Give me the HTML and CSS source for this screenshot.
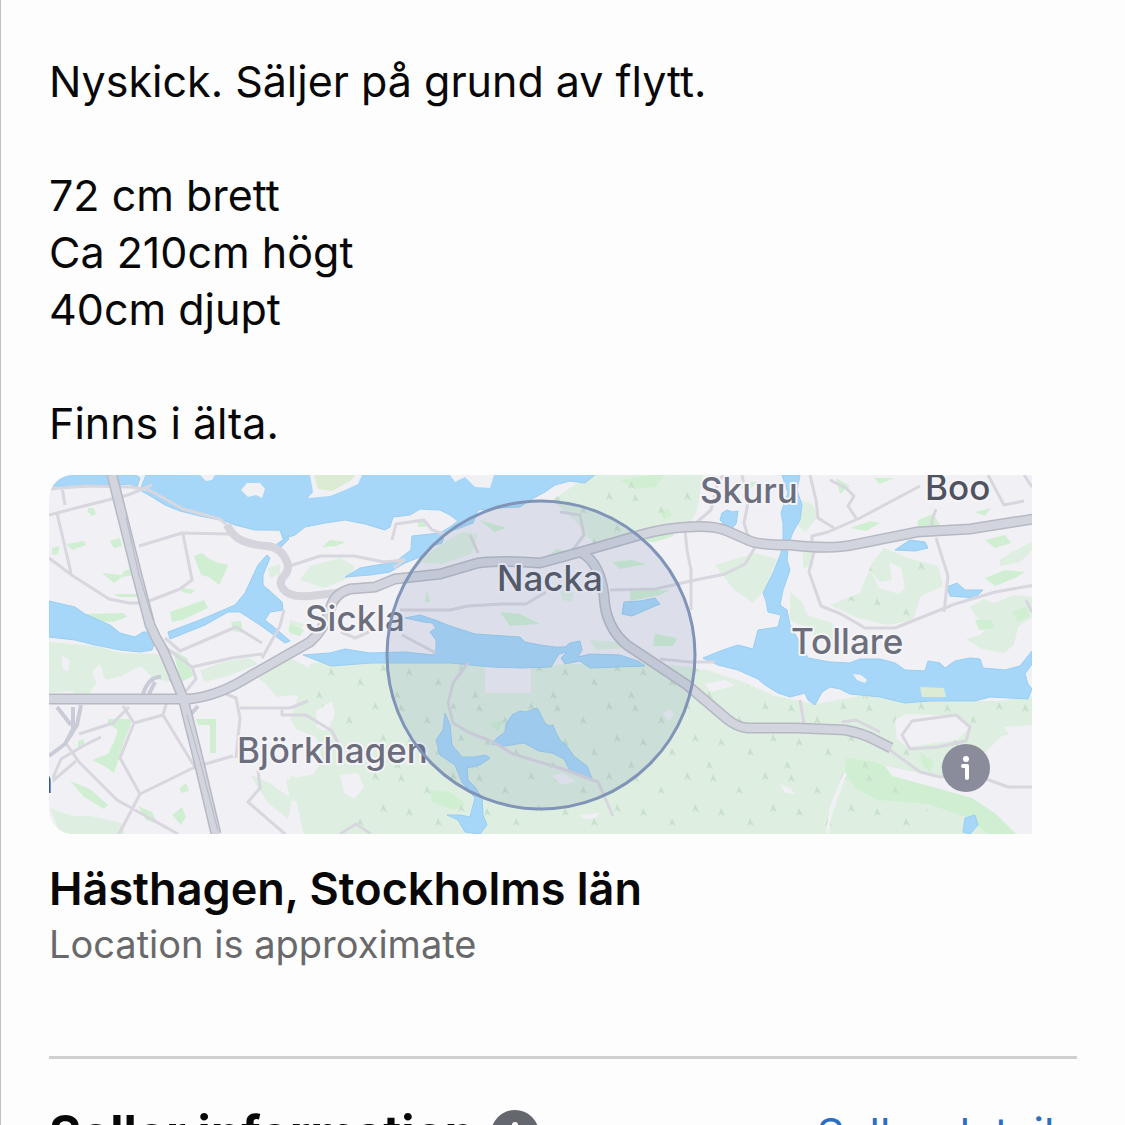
FILE: index.html
```html
<!DOCTYPE html>
<html lang="sv">
<head>
  <meta charset="utf-8">
  <title>Hästhagen, Stockholms län</title>
  <link rel="stylesheet" href="styles.css">
</head>
<body>
  <main class="listing">
    <p class="description">Nyskick. Säljer på grund av flytt.

72 cm brett
Ca 210cm högt
40cm djupt

Finns i älta.</p>

    <div class="map">
      <svg class="map-image" viewBox="49 475 983 359" role="img" aria-label="Nacka">
        <defs>
          <pattern id="trees" width="78" height="70" patternUnits="userSpaceOnUse">
            <path class="tree" d="M8 12l3-8 4 8-4-2zM34 24l3-8 4 8-4-2zM60 10l3-8 4 8-4-2zM16 46l3-8 4 8-4-2zM45 56l3-8 4 8-4-2zM68 42l3-8 4 8-4-2zM4 69l3-8 4 8-4-2z"/>
          </pattern>
        </defs>
        <rect class="land" x="49" y="475" width="983" height="359"/>

        <!-- forest and parks -->
        <g class="forest">
          <path d="M310 664l30-6h80l50 4 75 3 95-3 50 5 20 4 30 10 35 15 40 8 45-8 60 5h80l32-5v34l-30 6-25 25-8 28 20 15 12 30v24H346l-6-20-12-30-38-8-4-20 28-6 8-15-6-22-20-8-6-10z"/>
          <path d="M590 475h113l-6 35-8 17-40 6-50 17-25-30-22-20zM310 566l30-8 15 8-6 12-25 10-24-8zM448 540l14-8 16 2-6 20-30 10-26-2zM49 642l45 4 28 7 35 1 14 12-3 16-15-4-12-12-20 10-24 6-12 18-14-9-22 2zM830 605l30-12 12-30 12-15 24 10 30 8 5 20-22 10-8 24-25 5-30-7zM715 565l40-12 22 6-12 30-12 14-20-14z"/>
          <path d="M970 607l14-8 10 4 20-8 18 2v20l-14 10-4 18-10 8-22-4-16-10 14-4 8-8-10-8zM1000 560l12-8 20-10v8l-12 12-20 4z"/>
          <path d="M250 672l40-14 20 10 15 30-15 5-15-8-18 2-12-14zM50 808l22 8 18 0 32 7 3 11H60zM250 775l20 8 22 16-4 20-20-16zM290 775l25 10 18 20 15 29h-44zM860 715l40 5 30-5 26-8 60 4-10 22-30-8-30 4-45-4z"/>
          <path d="M790 592l12 10 6 14 22 6 14 12-4 6-24-4-14-10-12-6zM803 550l12 2-2 14-10 2zM800 500l12 4 6 12-12 16-8-6zM805 668l20 2 6 8-14-4zM800 662l20 0-4 3zM268 568l12-4 0 10-10 4zM290 620l14 4-6 12-8-2zM240 522l28 4 16-1-4 7-20-2zM200 670l24-8 26-4 8 6-30 12-24 6zM560 590l14 2-2 10-10-2zM590 640l30 2 4 6-28 2z"/>
        </g>
        <g class="park">
          <path d="M194 556l8-3 6 5 8 4 12 3-4 10-5 10-10-8-8-2-3-8zM170 612l34-12 4 8-26 12-10 2zM84 614l40-1 3 4-14 5-26-2zM173 650l14 8 6 18-12 6zM196 719h20v34h-6v-28h-12zM108 719l24 0-2 8-6 14-4 14-6 18-10-7-12-6 16-6 6-12 4-12-10-6zM78 741l6-2v8l-6 0z"/>
          <path d="M70 781l20 8 18 16-4 4-20-12zM102 573l20 2 2-4 12-4-2 8-12 2-8 6zM110 541l10-3 2 8-8 2zM66 544l18-3 2 4-14 5zM88 508h6l2 6-4 2-4-4zM116 594h30v3h-26l-6-2zM172 815l10-8 4 10-5 8zM138 806l14 6 6 12-12-4zM180 788l6-5 3 8-8 2zM52 548l8-2-2 8-6 1zM183 588l12 2-4 4-10-2zM231 622l10-1 2 12-10-2zM290 624l14 6-4 6-12-5z"/>
          <path d="M846 758l30 4 30 16 50 10 30 16 30 30h-28l-20-16-40-14-50-4-20-10-14-16zM920 752l14 10-4 10-8-8zM418 520l10 2-2 5-8 0zM330 540l16 2-10 4-14 1zM918 520l15-6 9 14-6 4-18-4zM620 480l30-5h14l-8 12-20 2zM985 540l20-5 6 8-16 5zM836 478l14 8-10 8zM985 578l20-8 20 2-10 6-20 8zM850 528l20-7 10 2-14 8zM874 478h20l-14 6zM936 485l10 4-6 4zM975 512l16-4-6 8zM1012 612l14-6 4 10-12 6zM975 620l16 0 4 8-16 2zM430 790l20 2 16 12-12 6-22-8z"/>
          <path d="M630 590h40l-10 5-30 6zM612 562l20-2 14 4-26 5zM500 612l20 2 20 10-30 2zM550 555l6-6 12 2-4 6zM480 520l26 8-12 4zM630 540l40-12 4 8-20 6zM425 602l2-12 3 12zM735 485l22-4-8 10zM655 634l22 4-4 8-20 0zM490 724l14-4-6 12zM660 512l8-4 4 8-8 4z"/>
        </g>
        <path class="tree-fill" d="M310 664l30-6h80l50 4 75 3 95-3 50 5 50 14 35 15 40 8 45-8 60 5h80l32-5v34l-30 6-45 20-10 22-40-10 10 30 30 33H346l-6-20-12-30-6-30 8-15-6-22-20-8zM590 475h113l-6 35-8 17-40 6-50 17-25-30-22-20zM830 605l30-12 12-30 12-15 24 10 30 8 5 20-22 10-8 24-25 5-30-7z"/>

        <!-- clearings -->
        <path class="land" d="M485 665h46v28h-46zM705 684l20-4 10 5-12 4-12 3zM663 714l7-5 4 6-5 6zM580 815l20-2-4 5-12 1zM552 776l10-3 14 8-14 4zM780 784l10 4 5 6-10-1zM895 720l10-6 54 2 10 12-12 12-50 7-10-8zM830 806l14-34 3 2-15 40-4 20-2-1zM885 766l40 8 20 4 34 8 16 14 17 14-10 4-30-20-50-14-30-8zM1004 727l28-2v46l-12-8-5-18zM316 711l16-10 3 14-8 16-10-3zM340 775l18-2 6 14-10 12-10-6zM870 570l10 12 12-2-3-18 12 6 4 20-6 6-20-6zM92 672l8-8 4 14 8 4-14 4zM62 656l8 4-2 12-6-4z"/>

        <!-- water -->
        <g class="water">
          <path d="M58 475l-8 11 30 1 50-3 7 3 3-9-4-3z"/>
          <path d="M146 475l-6 15 12 7 13 8 15 6 20 5 25 5 10 4 20 5h25l3 9 12-4 10-8 20-4 20-3 20 4 20 6 5-3 3-10 17-2 10-6 20 1 10 5 8 6-8 6-10 6-28 3-1 14-16 12-35 6-15 9 25-2 20-3 15-9 15-6 15-12 7-2 3-10 15-5 13-5 5-13 22-2 20-1 10-7 15-8 10-7 15-4 15 2 10-8 7-5z"/>
          <path d="M49 601l26 6 10 7 25 11 10 8 15 4 8-5 7 0 5 9-3 9-12 2-20-2-25-5-20-5-26-3z"/>
          <path d="M168 632l32-12 35-15 10-12 13-28 9-10 3 3-7 17v10l8 7 11 10 1 8-13 2-5 8 10 8 15 13-5 2-25-18-20-13h-12l-23 13-35 14zM277 544l10-7 2 2-8 8z"/>
          <path d="M303 655l27-2 15-4 25 4 35-1 28 3 3-6 0-9-6-8 6-4-4-5-8-1-19-4 15-3 15 5 15 6 25 8 45 3 5 5 15 3 15 2 10 0 5-4 10-2 2 9-4 7 12-3 30 1 18 6 7 5-55 2-10-7-15 3-4-6 6-6-8 2-8 13-30 1-30-1-40-4h-80l-40 3z"/>
          <path d="M492 744l5-6 8-6 1-8 6-9 8-4 6 1 11-4 3 5 5 10 4 3 4-1 3 8 4 7 6 5 8 11 10 8 3 2 5 12-6 0-7-4-10-5-5-10-12-6-13-2-15-8-20 3z"/>
          <path d="M445 713l5 12 2 20 10 12 13 0 10-2 5 3-10 7-13 3 1 12 7 7 7 11 1 17 4 10-7 9-15-2-7-12-11-5 13 0 10 2 5-19-13-16-7-17-15-10-4-15 7-10z"/>
          <path d="M624 602l16-1 15-3 5 6-12 5-16 7-10-2zM722 513l5-3 6 2 5-1-2 13-6 6-10-10zM895 550l15-10 15 2 3 6-13 3zM947 587l10-4 8 7 18 0-8 8-25-2zM965 818l10-3 3 10-8 9-7-2z"/>
          <path d="M782 475h18l-3 15 5 15-2 15-7 12-5 13-1 15 3 10-7 20-3 15 7 5 3 15 10 18 8 15 22 4 20 1 10-4 20 0 15 4 10 7 20 1 3-10 12 2 5 5 10-7 15-3 10 1 3 9 22 2 15-4 12-15v13l-7 10 3 10 4 5-4 10-38-2-15 4h-45l-25 2-25-6-30-3-10-5-10-2-8 5-7 13-7-5-3-7-15 4-12-4-13-8-7-6-20-9-20-5-15-7 20-8 15-5 15 4 5-19 20-3 3-12-13-3-2-11-3-8 10-20 8-20 2-15v-15l-2-10 7-20z"/>
        </g>
        <path class="land" d="M310 475l3 17-5 6 22-2 15-6 13-6 4-9zM450 475l5 7 10-5 10 10 15 1 4-13zM241 490l6-7 13 0 5 6-3 9-6-3-8 2zM200 475l6 6 6-1 3-5zM853 674l8 1 6 5-2 3-8-3z"/>
        <path class="meadow" d="M314 475l4 14 14 2 18-10 6-6zM920 687l24 1 2 9h-24z"/>

        <!-- small streets -->
        <g class="streets">
          <path d="M49 515l35-9 44-11 24-10M62 487l3 18M57 513l14 60M49 558l24 18 36 23 20 4h16M139 546l43-13 48 1M183 534l9 46-12 9-31 12M49 489l38-3 44 1 18 3 34 19 37 10 10 9M165 638l15 13 28-12 28-12 26 16M262 658l18-32 4-16M165 647l27 20 40-9 30-4M192 667l4 12-10 12M49 787l12-28 22-13 18-9M79 734l34-11 16-16M65 742l14 20 38 38 61 34M123 706l11 17 29-8 33 54M134 723l-14 35 20 36 55-27 38-11M49 784l27-23M140 794l-21 40M163 715l4-14M216 690l20 8 4 20-4 40M240 708l50 0 18-7M282 710v5h24l26 16 8 16M258 770l2 18-12 14 37 32M290 566l30-10 34 0 30 6 20-2-10 8M392 540l4-16 28-4 8 10 12 4M340 834l16-10 15 10"/>
          <path d="M400 610l50 0 18-4 34-2 24 0 20-12M402 635l34 18M341 632l14 6 14-6M468 663l-15 20-5 20 5 20 15 9 25 10 20 12 50 15 35 13 15 34M610 590l45-1 45-10 25-5 20-10 12-20M685 530l2 20 4 20v40M750 543l-6-20 4-20-6-28M697 522l14-12 6-25 6-10M660 659l30 3h25M560 512l20 3 4 20-12 16M470 535l8 18"/>
          <path d="M810 475l6 25 2 18 16 10M830 480l16 8 8 8-6 10 8 12M812 548l0-12 16-4 32-14 60-32M932 535v-14l4-12M814 552l-5 20 12 34 20 8 24 14h30l60-24 40-12 57-10M936 538l12 38-4 36M988 475l16 30 20-4M1024 475l8 12M800 700l4 24M842 722l14-2 24 12M890 750l30 22 20 5 30-4 38 14h24M902 735l10-14 44-6 14 12-4 14-28 6-28 2zM1026 600l6 12"/>
        </g>
        <g class="road">
          <path d="M227 525q6 12 16 16t24 5 20 16q3 8-3 14t-1 13q7 9 27 7l35-4"/>
        </g>
        <g class="ramps">
          <path d="M49 756l16-12 8-15v-22M57 707l14 18M81 705l-4 20-10 16M143 694q6-18 18-17M149 694l6-12M170 678l10 14M198 706l-12 14"/>
        </g>

        <!-- motorways: casing first, then surface -->
        <g class="casing">
          <path d="M582 553q18 10 22 42 1 32 23 50l60 40 40 34q10 8 20 9h50l48 2q20 4 30 10l16 8"/>
          <path d="M112 475l10 40 15 60 13 50q5 12 13 25 8 18 20 48l15 60 18 76M49 699h140q30-3 61-23l60-34q14-12 20-32 3-16 20-21l25-2 20-8 45-5 38-11q24-3 62 0 45-12 100-28 26-7 47-8 24-2 38 3l25 11q10 4 40 4 45 5 67-1l60-12 53-3 95-15"/>
        </g>
        <g class="surface">
          <path d="M582 553q18 10 22 42 1 32 23 50l60 40 40 34q10 8 20 9h50l48 2q20 4 30 10l16 8"/>
          <path d="M112 475l10 40 15 60 13 50q5 12 13 25 8 18 20 48l15 60 18 76M49 699h140q30-3 61-23l60-34q14-12 20-32 3-16 20-21l25-2 20-8 45-5 38-11q24-3 62 0 45-12 100-28 26-7 47-8 24-2 38 3l25 11q10 4 40 4 45 5 67-1l60-12 53-3 95-15"/>
        </g>
        <path class="lane" d="M126 517l13 58 14 45M187 715l14 50 17 66"/>

        <g class="labels">
          <text x="700" y="503">Skuru</text>
          <text x="791" y="654">Tollare</text>
          <text x="305" y="631">Sickla</text>
          <text x="237" y="763">Björkhagen</text>
          <text class="town" x="497" y="591">Nacka</text>
          <text class="town" x="925" y="500">Boo</text>
          <text class="town" x="32" y="793">n</text>
        </g>
        <circle class="area" cx="541" cy="655" r="154"/>
      </svg>
      <button class="map-info" type="button" aria-label="Map information">
        <svg viewBox="0 0 48 48" aria-hidden="true">
          <circle cx="24" cy="15" r="3"/>
          <path d="M21 22h4v12"/>
        </svg>
      </button>
    </div>

    <h2 class="place">Hästhagen, Stockholms län</h2>
    <p class="note">Location is approximate</p>

    <section class="seller">
      <h2 class="seller-title">Seller information</h2>
      <button class="seller-info" type="button" aria-label="About seller information">
        <svg viewBox="0 0 48 48" aria-hidden="true">
          <circle cx="24" cy="15" r="3"/>
          <path d="M21 22h4v12"/>
        </svg>
      </button>
      <a class="seller-link" href="#">Seller details</a>
    </section>
  </main>
</body>
</html>
```

FILE: styles.css
```css
* {
  box-sizing: border-box;
}

body {
  margin: 0;
  height: 100vh;
  overflow: hidden;
  background-color: #fdfdfd;
  color: #080808;
  font-family: Inter, "Liberation Sans", sans-serif;
}

.listing {
  min-height: 100vh;
  padding: 53px 48px 0;
  border-left: 1px solid #c0c0c0;
}

.description {
  margin: 0;
  font-size: 43px;
  line-height: 57px;
  white-space: pre-line;
}

.map {
  position: relative;
  max-width: 983px;
  margin-top: 23px;
  border-radius: 24px 0 0 24px;
  overflow: hidden;
}

.map-image {
  display: block;
  width: 100%;
}

.land {
  fill: #f1f0f5;
}

.forest {
  fill: #deefe1;
}

.park {
  fill: #d0efd2;
}

.tree {
  fill: #c8e0cd;
}

.tree-fill {
  fill: url(#trees);
}

.meadow {
  fill: #dcebd4;
}

.water {
  fill: #a6d7f9;
  stroke: #98cef1;
  stroke-width: 1;
}

.streets {
  fill: none;
  stroke: #d8d6de;
  stroke-width: 3;
  stroke-linejoin: round;
}

.road {
  fill: none;
  stroke: #d5d3db;
  stroke-width: 8;
}

.ramps {
  fill: none;
  stroke: #c9cbd6;
  stroke-width: 4;
}

.casing {
  fill: none;
  stroke: #b6b8c4;
  stroke-width: 11;
}

.surface {
  fill: none;
  stroke: #d2d4de;
  stroke-width: 8;
}

.lane {
  fill: none;
  stroke: #b6b8c4;
  stroke-width: 1;
}

.labels {
  fill: #6c6e7c;
  stroke: #f4f4f8;
  stroke-width: 4;
  stroke-linejoin: round;
  paint-order: stroke;
  font-size: 35px;
  font-weight: 500;
}

.town {
  fill: #50525e;
}

.area {
  fill: #6f86b0;
  fill-opacity: 0.16;
  stroke: #8094b8;
  stroke-width: 3;
}

.map-info,
.seller-info {
  width: 48px;
  height: 48px;
  padding: 0;
  border: none;
  border-radius: 50%;
  background-color: #8b8c9b;
  cursor: pointer;
}

.map-info {
  position: absolute;
  right: 42px;
  bottom: 42px;
}

.map-info svg,
.seller-info svg {
  display: block;
  fill: #fff;
}

.map-info path,
.seller-info path {
  fill: none;
  stroke: #fff;
  stroke-width: 4;
  stroke-linecap: round;
  stroke-linejoin: round;
}

.place {
  margin: 26px 0 0;
  font-size: 45px;
  line-height: 57px;
  font-weight: 600;
}

.note {
  margin: 0;
  color: #69696b;
  font-size: 38px;
  line-height: 54px;
}

.seller {
  display: flex;
  align-items: center;
  margin-top: 85px;
  padding-top: 46px;
  border-top: 3px solid #d0d0d0;
}

.seller-title {
  margin: 0;
  font-size: 49px;
  line-height: 57px;
  font-weight: 700;
}

.seller-info {
  margin-left: 16px;
  background-color: #65676f;
}

.seller-link {
  margin-left: auto;
  color: #2a6fc4;
  font-size: 43px;
  line-height: 57px;
  text-decoration: none;
}
```
